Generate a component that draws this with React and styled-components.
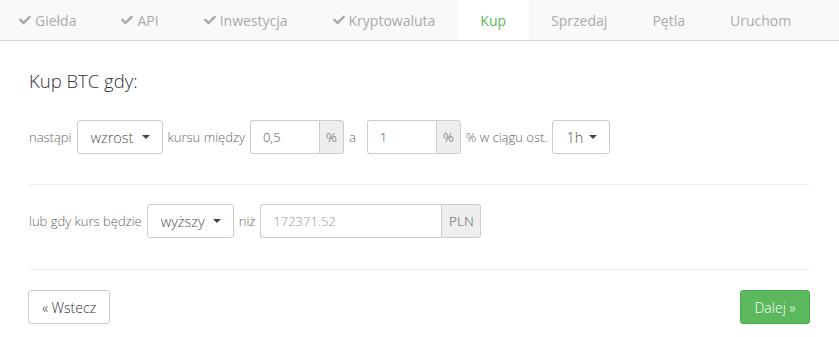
import React from "react";
import styled, { createGlobalStyle } from "styled-components";
import { FaCheck } from "react-icons/fa";

const Global = createGlobalStyle`
  html, body { margin: 0; padding: 0; background: #fff; }
  body { font-family: "Open Sans", "DejaVu Sans", sans-serif; color: #333; }
  * { box-sizing: border-box; }
`;

const Page = styled.div`
  width: 839px;
  background: #fff;
`;

const Nav = styled.ul`
  display: flex;
  margin: 0;
  padding: 0;
  list-style: none;
  height: 41px;
  background: #f9f9f9;
  border-bottom: 1px solid #d6d6d6;
`;

const Tab = styled.li`
  display: flex;
  align-items: center;
  gap: 4px;
  height: 40px;
  padding: 0 22.5px;
  font-size: 14px;
  color: ${(p) => (p.$active ? "#5cb85c" : "#aaa")};
  background: ${(p) => (p.$active ? "#fff" : "transparent")};
  &:first-child { padding-left: 19px; }
  svg { width: 12px; height: 12px; color: #aaa; }
`;

const Body = styled.div`
  padding: 0 29px;
`;

const Heading = styled.h4`
  margin: 0;
  padding-top: 29px;
  font-size: 18.5px;
  font-weight: 300;
  line-height: 22px;
  color: #333;
`;

const FormRow = styled.div`
  display: flex;
  align-items: center;
  gap: 5px;
  margin-top: ${(p) => p.$top}px;
`;

const Label = styled.span`
  font-size: 13px;
  font-weight: 300;
  color: #666;
  white-space: nowrap;
  margin-right: ${(p) => p.$mr || 0}px;
`;

const SelectBtn = styled.div`
  display: flex;
  align-items: center;
  justify-content: space-between;
  width: ${(p) => p.$w}px;
  height: 34px;
  padding: 0 12px 0 13px;
  border: 1px solid #ccc;
  border-radius: 3px;
  background: #fff;
  font-size: 14.5px;
  font-weight: 300;
  color: #555;
`;

const Caret = styled.span`
  width: 0;
  height: 0;
  border-left: 4px solid transparent;
  border-right: 4px solid transparent;
  border-top: 4px solid #444;
`;

const InputGroup = styled.div`
  display: flex;
  height: 34px;
`;

const Field = styled.div`
  display: flex;
  align-items: center;
  width: ${(p) => p.$w}px;
  padding: 0 12px;
  border: 1px solid #ccc;
  border-right: none;
  border-radius: 3px 0 0 3px;
  background: #fff;
  font-size: 13px;
  font-weight: 300;
  color: ${(p) => (p.$placeholder ? "#999" : "#555")};
`;

const Addon = styled.div`
  display: flex;
  align-items: center;
  justify-content: center;
  width: ${(p) => p.$w}px;
  border: 1px solid #ccc;
  border-radius: 0 3px 3px 0;
  background: #eee;
  font-size: 13.5px;
  font-weight: 300;
  color: #555;
`;

const Divider = styled.hr`
  margin: ${(p) => p.$top}px 0 0;
  border: 0;
  border-top: 1px solid #eee;
`;

const Footer = styled.div`
  display: flex;
  justify-content: space-between;
  margin-top: 20px;
  padding-bottom: 14px;
`;

const Button = styled.div`
  display: flex;
  align-items: center;
  justify-content: center;
  width: ${(p) => p.$w}px;
  height: 34px;
  border: 1px solid ${(p) => (p.$primary ? "#4cae4c" : "#ccc")};
  border-radius: 3px;
  background: ${(p) => (p.$primary ? "#5cb85c" : "#fff")};
  color: ${(p) => (p.$primary ? "#fff" : "#333")};
  font-size: 14px;
  font-weight: 300;
  margin-left: ${(p) => p.$ml || 0}px;
`;

const tabs = [
  { label: "Giełda", done: true },
  { label: "API", done: true },
  { label: "Inwestycja", done: true },
  { label: "Kryptowaluta", done: true },
  { label: "Kup", active: true },
  { label: "Sprzedaj" },
  { label: "Pętla" },
  { label: "Uruchom" },
];

export default function App() {
  return (
    <Page>
      <Global />
      <Nav>
        {tabs.map((t) => (
          <Tab key={t.label} $active={t.active}>
            {t.done && <FaCheck />}
            {t.label}
          </Tab>
        ))}
      </Nav>
      <Body>
        <Heading>Kup BTC gdy:</Heading>
        <FormRow $top={28}>
          <Label>nastąpi</Label>
          <SelectBtn $w={86}>
            wzrost <Caret />
          </SelectBtn>
          <Label>kursu między</Label>
          <InputGroup>
            <Field $w={69}>0,5</Field>
            <Addon $w={25}>%</Addon>
          </InputGroup>
          <Label $mr={6}>a</Label>
          <InputGroup>
            <Field $w={69}>1</Field>
            <Addon $w={25}>%</Addon>
          </InputGroup>
          <Label>% w ciągu ost.</Label>
          <SelectBtn $w={58}>
            1h <Caret />
          </SelectBtn>
        </FormRow>
        <Divider $top={30} />
        <FormRow $top={19}>
          <Label>lub gdy kurs będzie</Label>
          <SelectBtn $w={87}>
            wyższy <Caret />
          </SelectBtn>
          <Label>niż</Label>
          <InputGroup>
            <Field $w={181} $placeholder>172371.52</Field>
            <Addon $w={40}>PLN</Addon>
          </InputGroup>
        </FormRow>
        <Divider $top={31} />
        <Footer>
          <Button $w={82} $ml={-1}>« Wstecz</Button>
          <Button $w={70} $primary>Dalej »</Button>
        </Footer>
      </Body>
    </Page>
  );
}
